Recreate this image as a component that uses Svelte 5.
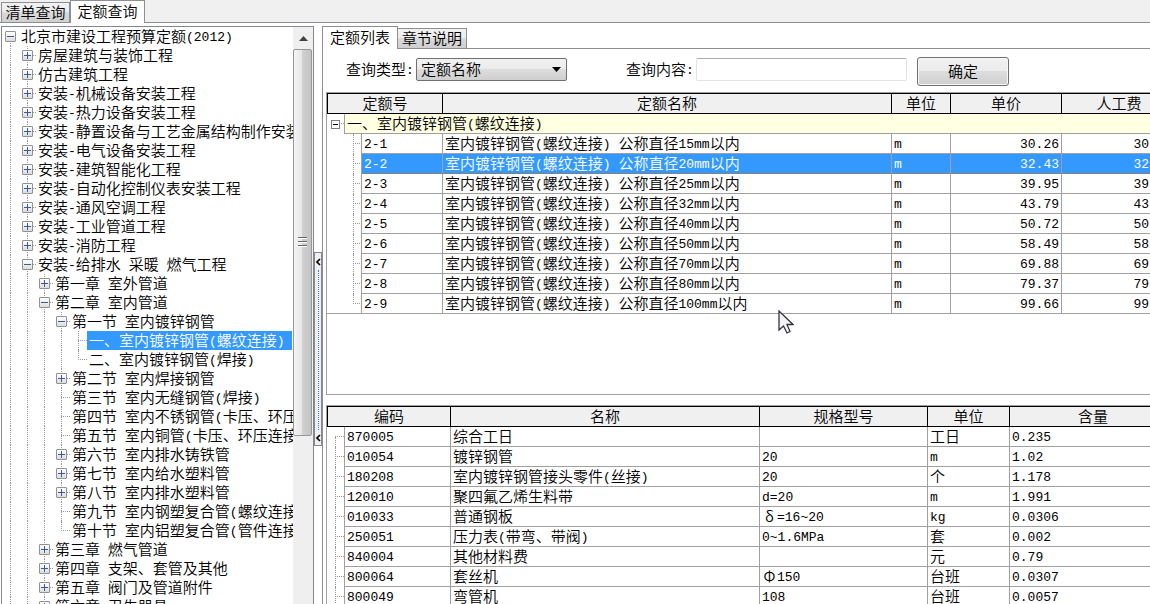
<script>
	let mainTab = $state('定额查询');
	let subTab = $state('定额列表');
	let queryType = $state('定额名称');
	let keyword = $state('');
	let selectedNode = $state(16);
	let selectedCode = $state('2-2');

	// mark: '+' closed branch, '-' open branch, '' leaf, 'end' last leaf of its branch
	const nodes = [
		{ level: 0, mark: '-', name: '北京市建设工程预算定额(2012)' },
		{ level: 1, mark: '+', name: '房屋建筑与装饰工程' },
		{ level: 1, mark: '+', name: '仿古建筑工程' },
		{ level: 1, mark: '+', name: '安装-机械设备安装工程' },
		{ level: 1, mark: '+', name: '安装-热力设备安装工程' },
		{ level: 1, mark: '+', name: '安装-静置设备与工艺金属结构制作安装工程' },
		{ level: 1, mark: '+', name: '安装-电气设备安装工程' },
		{ level: 1, mark: '+', name: '安装-建筑智能化工程' },
		{ level: 1, mark: '+', name: '安装-自动化控制仪表安装工程' },
		{ level: 1, mark: '+', name: '安装-通风空调工程' },
		{ level: 1, mark: '+', name: '安装-工业管道工程' },
		{ level: 1, mark: '+', name: '安装-消防工程' },
		{ level: 1, mark: '-', name: '安装-给排水 采暖 燃气工程' },
		{ level: 2, mark: '+', name: '第一章 室外管道' },
		{ level: 2, mark: '-', name: '第二章 室内管道' },
		{ level: 3, mark: '-', name: '第一节 室内镀锌钢管' },
		{ level: 4, mark: '', name: '一、室内镀锌钢管(螺纹连接)' },
		{ level: 4, mark: 'end', name: '二、室内镀锌钢管(焊接)' },
		{ level: 3, mark: '+', name: '第二节 室内焊接钢管' },
		{ level: 3, mark: '', name: '第三节 室内无缝钢管(焊接)' },
		{ level: 3, mark: '', name: '第四节 室内不锈钢管(卡压、环压连接)' },
		{ level: 3, mark: '', name: '第五节 室内铜管(卡压、环压连接)' },
		{ level: 3, mark: '+', name: '第六节 室内排水铸铁管' },
		{ level: 3, mark: '+', name: '第七节 室内给水塑料管' },
		{ level: 3, mark: '+', name: '第八节 室内排水塑料管' },
		{ level: 3, mark: '', name: '第九节 室内钢塑复合管(螺纹连接)' },
		{ level: 3, mark: 'end', name: '第十节 室内铝塑复合管(管件连接)' },
		{ level: 2, mark: '+', name: '第三章 燃气管道' },
		{ level: 2, mark: '+', name: '第四章 支架、套管及其他' },
		{ level: 2, mark: '+', name: '第五章 阀门及管道附件' },
		{ level: 2, mark: '+', name: '第六章 卫生器具' }
	];

	const quotas = [
		{ code: '2-1', size: 15, price: '30.26', labor: '30' },
		{ code: '2-2', size: 20, price: '32.43', labor: '32' },
		{ code: '2-3', size: 25, price: '39.95', labor: '39' },
		{ code: '2-4', size: 32, price: '43.79', labor: '43' },
		{ code: '2-5', size: 40, price: '50.72', labor: '50' },
		{ code: '2-6', size: 50, price: '58.49', labor: '58' },
		{ code: '2-7', size: 70, price: '69.88', labor: '69' },
		{ code: '2-8', size: 80, price: '79.37', labor: '79' },
		{ code: '2-9', size: 100, price: '99.66', labor: '99' }
	];

	const materials = [
		{ code: '870005', name: '综合工日', spec: '', unit: '工日', amount: '0.235' },
		{ code: '010054', name: '镀锌钢管', spec: '20', unit: 'm', amount: '1.02' },
		{ code: '180208', name: '室内镀锌钢管接头零件(丝接)', spec: '20', unit: '个', amount: '1.178' },
		{ code: '120010', name: '聚四氟乙烯生料带', spec: 'd=20', unit: 'm', amount: '1.991' },
		{ code: '010033', name: '普通钢板', spec: 'δ=16~20', unit: 'kg', amount: '0.0306' },
		{ code: '250051', name: '压力表(带弯、带阀)', spec: '0~1.6MPa', unit: '套', amount: '0.002' },
		{ code: '840004', name: '其他材料费', spec: '', unit: '元', amount: '0.79' },
		{ code: '800064', name: '套丝机', spec: 'Φ150', unit: '台班', amount: '0.0307' },
		{ code: '800049', name: '弯管机', spec: '108', unit: '台班', amount: '0.0057' }
	];

	// latin runs are set in a smaller monospace than the chinese text,
	// greek letters take a full-width cell
	const runs = (text) => text.match(/[\x20-\x7e]+|[δΦ]|[^\x20-\x7eδΦ]+/g) ?? [];
</script>

{#snippet mixed(text)}
	{#each runs(text) as run}{#if /^[\x20-\x7e]/.test(run)}<span class="latin">{run}</span>{:else if /[δΦ]/.test(run)}<span class="greek">{run}</span>{:else}{run}{/if}{/each}
{/snippet}

<div class="app">
	<nav class="tabs main-tabs">
		{#each ['清单查询', '定额查询'] as tab}
			<button class="tab" class:active={mainTab === tab} onclick={() => (mainTab = tab)}>{tab}</button>
		{/each}
	</nav>

	<div class="body">
		<aside class="tree-panel">
			<div class="tree">
				{#each nodes as node, i}
					<div class="node">
						{#each Array(node.level) as _}
							<span class="guide line"></span>
						{/each}
						<span
							class="guide"
							class:line={i > 0 && node.mark !== 'end'}
							class:root={i === 0}
							class:stub={i > 0}
							class:end={node.mark === 'end'}
						>
							{#if node.mark === '+' || node.mark === '-'}
								<button class="toggle" aria-label={node.mark === '+' ? '展开' : '折叠'}>
									<svg width="9" height="9" viewBox="0 0 9 9">
										<path d={node.mark === '+' ? 'M1 4.5h7M4.5 1v7' : 'M1 4.5h7'} stroke="#3c5a96" />
									</svg>
								</button>
							{/if}
						</span>
						<button class="name" class:selected={selectedNode === i} onclick={() => (selectedNode = i)}>
							{@render mixed(node.name)}
						</button>
					</div>
				{/each}
			</div>
			<div class="scrollbar">
				<button class="up" aria-label="向上滚动">
					<svg width="9" height="5" viewBox="0 0 9 5"><path d="M0 5L4.5 0L9 5z" fill="#404040" /></svg>
				</button>
				<div class="thumb"><i></i><i></i><i></i></div>
			</div>
		</aside>

		<div class="splitter">
			<button class="grip" aria-label="收起">
				<svg width="5" height="8" viewBox="0 0 5 8"><path d="M4 1L1 4L4 7" fill="none" stroke="#000" stroke-width="1.6" /></svg>
				<span class="dots"></span>
				<svg width="5" height="8" viewBox="0 0 5 8"><path d="M4 1L1 4L4 7" fill="none" stroke="#000" stroke-width="1.6" /></svg>
			</button>
		</div>

		<main class="content">
			<nav class="tabs sub-tabs">
				{#each ['定额列表', '章节说明'] as tab}
					<button class="tab" class:active={subTab === tab} onclick={() => (subTab = tab)}>{tab}</button>
				{/each}
			</nav>

			<form class="query" onsubmit={(e) => e.preventDefault()}>
				<label for="type">查询类型<span class="latin">:</span></label>
				<div class="select">
					<select id="type" bind:value={queryType}>
						<option>定额名称</option>
						<option>定额编号</option>
					</select>
					<svg width="9" height="5" viewBox="0 0 9 5"><path d="M0 0h9L4.5 5z" fill="#000" /></svg>
				</div>
				<label class="second" for="keyword">查询内容<span class="latin">:</span></label>
				<input id="keyword" type="text" bind:value={keyword} />
				<button class="confirm">确定</button>
			</form>

			<section class="grid quota">
				<table>
					<colgroup>
						<col class="gutter" />
						<col class="indent" />
						<col class="code" />
						<col />
						<col class="unit" />
						<col class="price" />
						<col class="labor" />
					</colgroup>
					<thead>
						<tr>
							<th colspan="3">定额号</th>
							<th>定额名称</th>
							<th>单位</th>
							<th>单价</th>
							<th class="cut">人工费</th>
						</tr>
					</thead>
					<tbody>
						<tr class="group">
							<td class="tree-cell">
								<span class="guide stub">
									<button class="fold" aria-label="折叠">
										<svg width="7" height="7" viewBox="0 0 7 7"><path d="M1 3.5h5" stroke="#000" /></svg>
									</button>
								</span>
							</td>
							<td colspan="6">{@render mixed('一、室内镀锌钢管(螺纹连接)')}</td>
						</tr>
						{#each quotas as row, i}
							<tr class:current={selectedCode === row.code} onclick={() => (selectedCode = row.code)}>
								<td class="tree-cell blank" class:bottom={i === quotas.length - 1}></td>
								<td class="tree-cell" class:bottom={i === quotas.length - 1}>
									<span class="guide stub" class:line={i < quotas.length - 1} class:end={i === quotas.length - 1}></span>
								</td>
								<td>{@render mixed(row.code)}</td>
								<td>{@render mixed(`室内镀锌钢管(螺纹连接) 公称直径${row.size}mm以内`)}</td>
								<td>{@render mixed('m')}</td>
								<td class="num">{@render mixed(row.price)}</td>
								<td class="num">{@render mixed(row.labor)}</td>
							</tr>
						{/each}
					</tbody>
				</table>
			</section>

			<section class="grid detail">
				<table>
					<colgroup>
						<col class="gutter" />
						<col class="mat-code" />
						<col />
						<col class="spec" />
						<col class="mat-unit" />
						<col class="amount" />
					</colgroup>
					<thead>
						<tr>
							<th colspan="2">编码</th>
							<th>名称</th>
							<th>规格型号</th>
							<th>单位</th>
							<th class="cut">含量</th>
						</tr>
					</thead>
					<tbody>
						{#each materials as row, i}
							<tr>
								<td class="tree-cell">
									<span class="guide line stub" class:start={i === 0}></span>
								</td>
								<td>{@render mixed(row.code)}</td>
								<td>{@render mixed(row.name)}</td>
								<td>{@render mixed(row.spec)}</td>
								<td>{@render mixed(row.unit)}</td>
								<td>{@render mixed(row.amount)}</td>
							</tr>
						{/each}
					</tbody>
				</table>
			</section>
		</main>
	</div>

	<svg class="pointer" width="16" height="24" viewBox="0 0 16 24">
		<path d="M1 1V20L5.5 16L9 23L12 21.5L9 14.5H15z" fill="#f4f4f6" stroke="#34343f" stroke-width="1.3" />
	</svg>
</div>

<style>
	:global(body) {
		margin: 0;
	}
	.app {
		position: relative;
		display: flex;
		flex-direction: column;
		height: 100vh;
		overflow: hidden;
		background: #fff;
		color: #000;
		font: 350 15px/17px 'Noto Sans CJK SC', sans-serif;
	}
	.app * {
		box-sizing: border-box;
	}
	button,
	select,
	input {
		font: inherit;
		color: inherit;
		margin: 0;
		padding: 0;
	}
	svg {
		display: block;
	}
	.latin {
		font: 13px/1 'Liberation Mono', monospace;
		vertical-align: 1px;
		white-space: pre;
	}
	.greek {
		display: inline-block;
		width: 15px;
		text-align: center;
	}

	/* tabs */
	.tabs {
		display: flex;
		align-items: flex-end;
		flex: none;
	}
	.main-tabs {
		height: 23px;
		padding-left: 1px;
		background: #f0f0f0;
		border-bottom: 1px solid #8c8e94;
	}
	.tab {
		height: 20px;
		width: 69px;
		padding-bottom: 2px;
		border: 1px solid #8c8e94;
		border-bottom: 0;
		background: linear-gradient(#f2f2f2, #ebebeb 50%, #dadada 50%, #cfcfcf);
		white-space: nowrap;
	}
	.tab.active {
		width: 75px;
		height: 23px;
		padding-bottom: 4px;
		background: #fff;
	}
	.main-tabs .tab.active {
		margin-bottom: -1px;
	}

	.body {
		display: flex;
		flex: 1;
		min-height: 0;
		padding-top: 3px;
	}

	/* tree */
	.tree-panel {
		display: flex;
		flex: none;
		width: 313px;
		margin-left: 1px;
		border: 1px solid #828790;
		border-bottom: 0;
		overflow: hidden;
	}
	.tree {
		flex: 1;
		min-width: 0;
		overflow: hidden;
	}
	.node {
		display: flex;
		height: 19px;
	}
	.guide {
		position: relative;
		display: flex;
		align-items: center;
		justify-content: center;
		flex: none;
		width: 17px;
		height: 100%;
	}
	.guide.line::before,
	.guide.end::before,
	.guide.root::before {
		content: '';
		position: absolute;
		left: 8px;
		top: 0;
		bottom: 0;
		border-left: 1px dotted #999;
	}
	.guide.end::before {
		bottom: 50%;
	}
	.guide.root::before,
	.guide.start::before {
		top: 50%;
	}
	.guide.stub::after {
		content: '';
		position: absolute;
		left: 8px;
		right: 0;
		top: 9px;
		border-top: 1px dotted #999;
	}
	.toggle,
	.fold {
		position: relative;
		z-index: 1;
		display: grid;
		place-items: center;
	}
	.toggle {
		width: 11px;
		height: 11px;
		border: 1px solid #919191;
		border-radius: 1px;
		background: linear-gradient(#fff, #dcdcdc);
	}
	.name {
		flex: 1;
		min-width: 0;
		margin-right: 1px;
		padding: 0 0 2px 2px;
		border: 0;
		background: none;
		text-align: left;
		white-space: nowrap;
	}
	.name.selected {
		background: #39f;
		color: #fff;
	}

	.scrollbar {
		flex: none;
		width: 20px;
		background: #efefef;
	}
	.up {
		display: grid;
		place-items: center;
		width: 100%;
		height: 22px;
		border: 0;
		background: none;
	}
	.thumb {
		display: flex;
		flex-direction: column;
		align-items: center;
		justify-content: center;
		gap: 2px;
		width: 19px;
		height: 67%;
		border: 1px solid #979797;
		border-radius: 2px;
		background: linear-gradient(90deg, #f4f4f4, #e8e8e8 45%, #d0d0d0 50%, #c4c4c4);
	}
	.thumb i {
		width: 9px;
		height: 2px;
		background: #666;
		border-bottom: 1px solid #fff;
	}

	/* splitter */
	.splitter {
		flex: none;
		width: 8px;
		padding-top: 226px;
	}
	.grip {
		display: flex;
		flex-direction: column;
		align-items: center;
		gap: 4px;
		width: 8px;
		height: 194px;
		padding: 5px 0 3px;
		border: 1px solid #828790;
		background: #f0f0f0;
	}
	.dots {
		flex: 1;
		border-left: 1px dotted #2d7fd8;
	}

	/* right side */
	.content {
		display: flex;
		flex-direction: column;
		flex: 1;
		min-width: 0;
		border-left: 1px solid #8c8e94;
	}
	.sub-tabs {
		height: 23px;
		background: linear-gradient(#8c8e94, #8c8e94) left bottom / 100% 1px no-repeat;
	}
	.sub-tabs .tab {
		height: 21px;
		border-left: 0;
		border-bottom: 1px solid #8c8e94;
	}
	.sub-tabs .tab.active {
		height: 23px;
		border-bottom: 0;
	}
	.query {
		display: flex;
		align-items: center;
		flex: none;
		height: 43px;
		padding: 0 0 2px 23px;
	}
	.query label {
		width: 70px;
		padding-bottom: 2px;
		white-space: nowrap;
	}
	.query .second {
		margin-left: 59px;
	}
	.select {
		position: relative;
		width: 151px;
	}
	.select svg {
		position: absolute;
		right: 6px;
		top: 9px;
		pointer-events: none;
	}
	select {
		appearance: none;
		display: block;
		width: 100%;
		height: 23px;
		padding: 0 0 2px 4px;
		border: 1px solid #707070;
		border-radius: 2px;
		background: linear-gradient(#f2f2f2, #ebebeb 50%, #ddd 50%, #cfcfcf);
	}
	input {
		width: 211px;
		height: 23px;
		padding: 0 4px;
		border: 1px solid #e2e3ea;
		border-top-color: #abadb3;
		border-radius: 2px;
		background: #fff;
	}
	.confirm {
		width: 92px;
		height: 29px;
		margin: 3px 0 0 10px;
		padding-bottom: 2px;
		border: 1px solid #707070;
		border-radius: 3px;
		background: linear-gradient(#f2f2f2, #ebebeb 50%, #ddd 50%, #cfcfcf);
		box-shadow: inset 0 0 0 1px #f8f8f8;
	}

	/* grids */
	.grid {
		flex: none;
		margin-left: 3px;
		border: 1px solid #a0a0a0;
		border-right: 0;
		overflow: hidden;
	}
	.quota {
		min-height: 303px;
		margin-bottom: 10px;
	}
	.detail {
		flex: 1;
		border-bottom: 0;
	}
	table {
		width: 100%;
		table-layout: fixed;
		border-collapse: separate;
		border-spacing: 0;
	}
	.gutter {
		width: 18px;
	}
	.indent {
		width: 17px;
	}
	.code {
		width: 81px;
	}
	.unit {
		width: 59px;
	}
	.price {
		width: 111px;
	}
	.labor {
		width: 88px;
	}
	.mat-code {
		width: 106px;
	}
	.spec {
		width: 168px;
	}
	.mat-unit {
		width: 82px;
	}
	.amount {
		width: 140px;
	}
	th {
		height: 21px;
		padding: 0 0 2px;
		border: solid #000;
		border-width: 1px 1px 1px 0;
		background: #f0f0f0;
		font-weight: inherit;
	}
	th:first-child {
		border-left-width: 1px;
	}
	th.cut {
		padding-left: 26px;
		border-right: 0;
	}
	td {
		height: 20px;
		padding: 0 2px 2px;
		border: solid #a0a0a0;
		border-width: 0 1px 1px 0;
		white-space: nowrap;
	}
	td:last-child {
		border-right: 0;
	}
	.num {
		text-align: right;
	}
	.num:last-child {
		padding-right: 1px;
	}
	.tree-cell {
		padding: 0;
		border-bottom: 0;
	}
	.tree-cell .guide {
		height: 20px;
	}
	.tree-cell.blank {
		border-right: 0;
	}
	.tree-cell.bottom {
		border-bottom: 1px solid #a0a0a0;
	}
	.tree-cell.bottom .guide {
		height: 19px;
	}
	.fold {
		width: 9px;
		height: 9px;
		border: 1px solid #808080;
		background: #fff;
	}
	.group td:not(.tree-cell) {
		background: #ffffe1;
	}
	.current td:not(.tree-cell) {
		background: #39f;
		color: #fff;
		border-bottom-color: #8a8078;
	}

	.pointer {
		position: absolute;
		left: 778px;
		top: 310px;
	}
</style>
